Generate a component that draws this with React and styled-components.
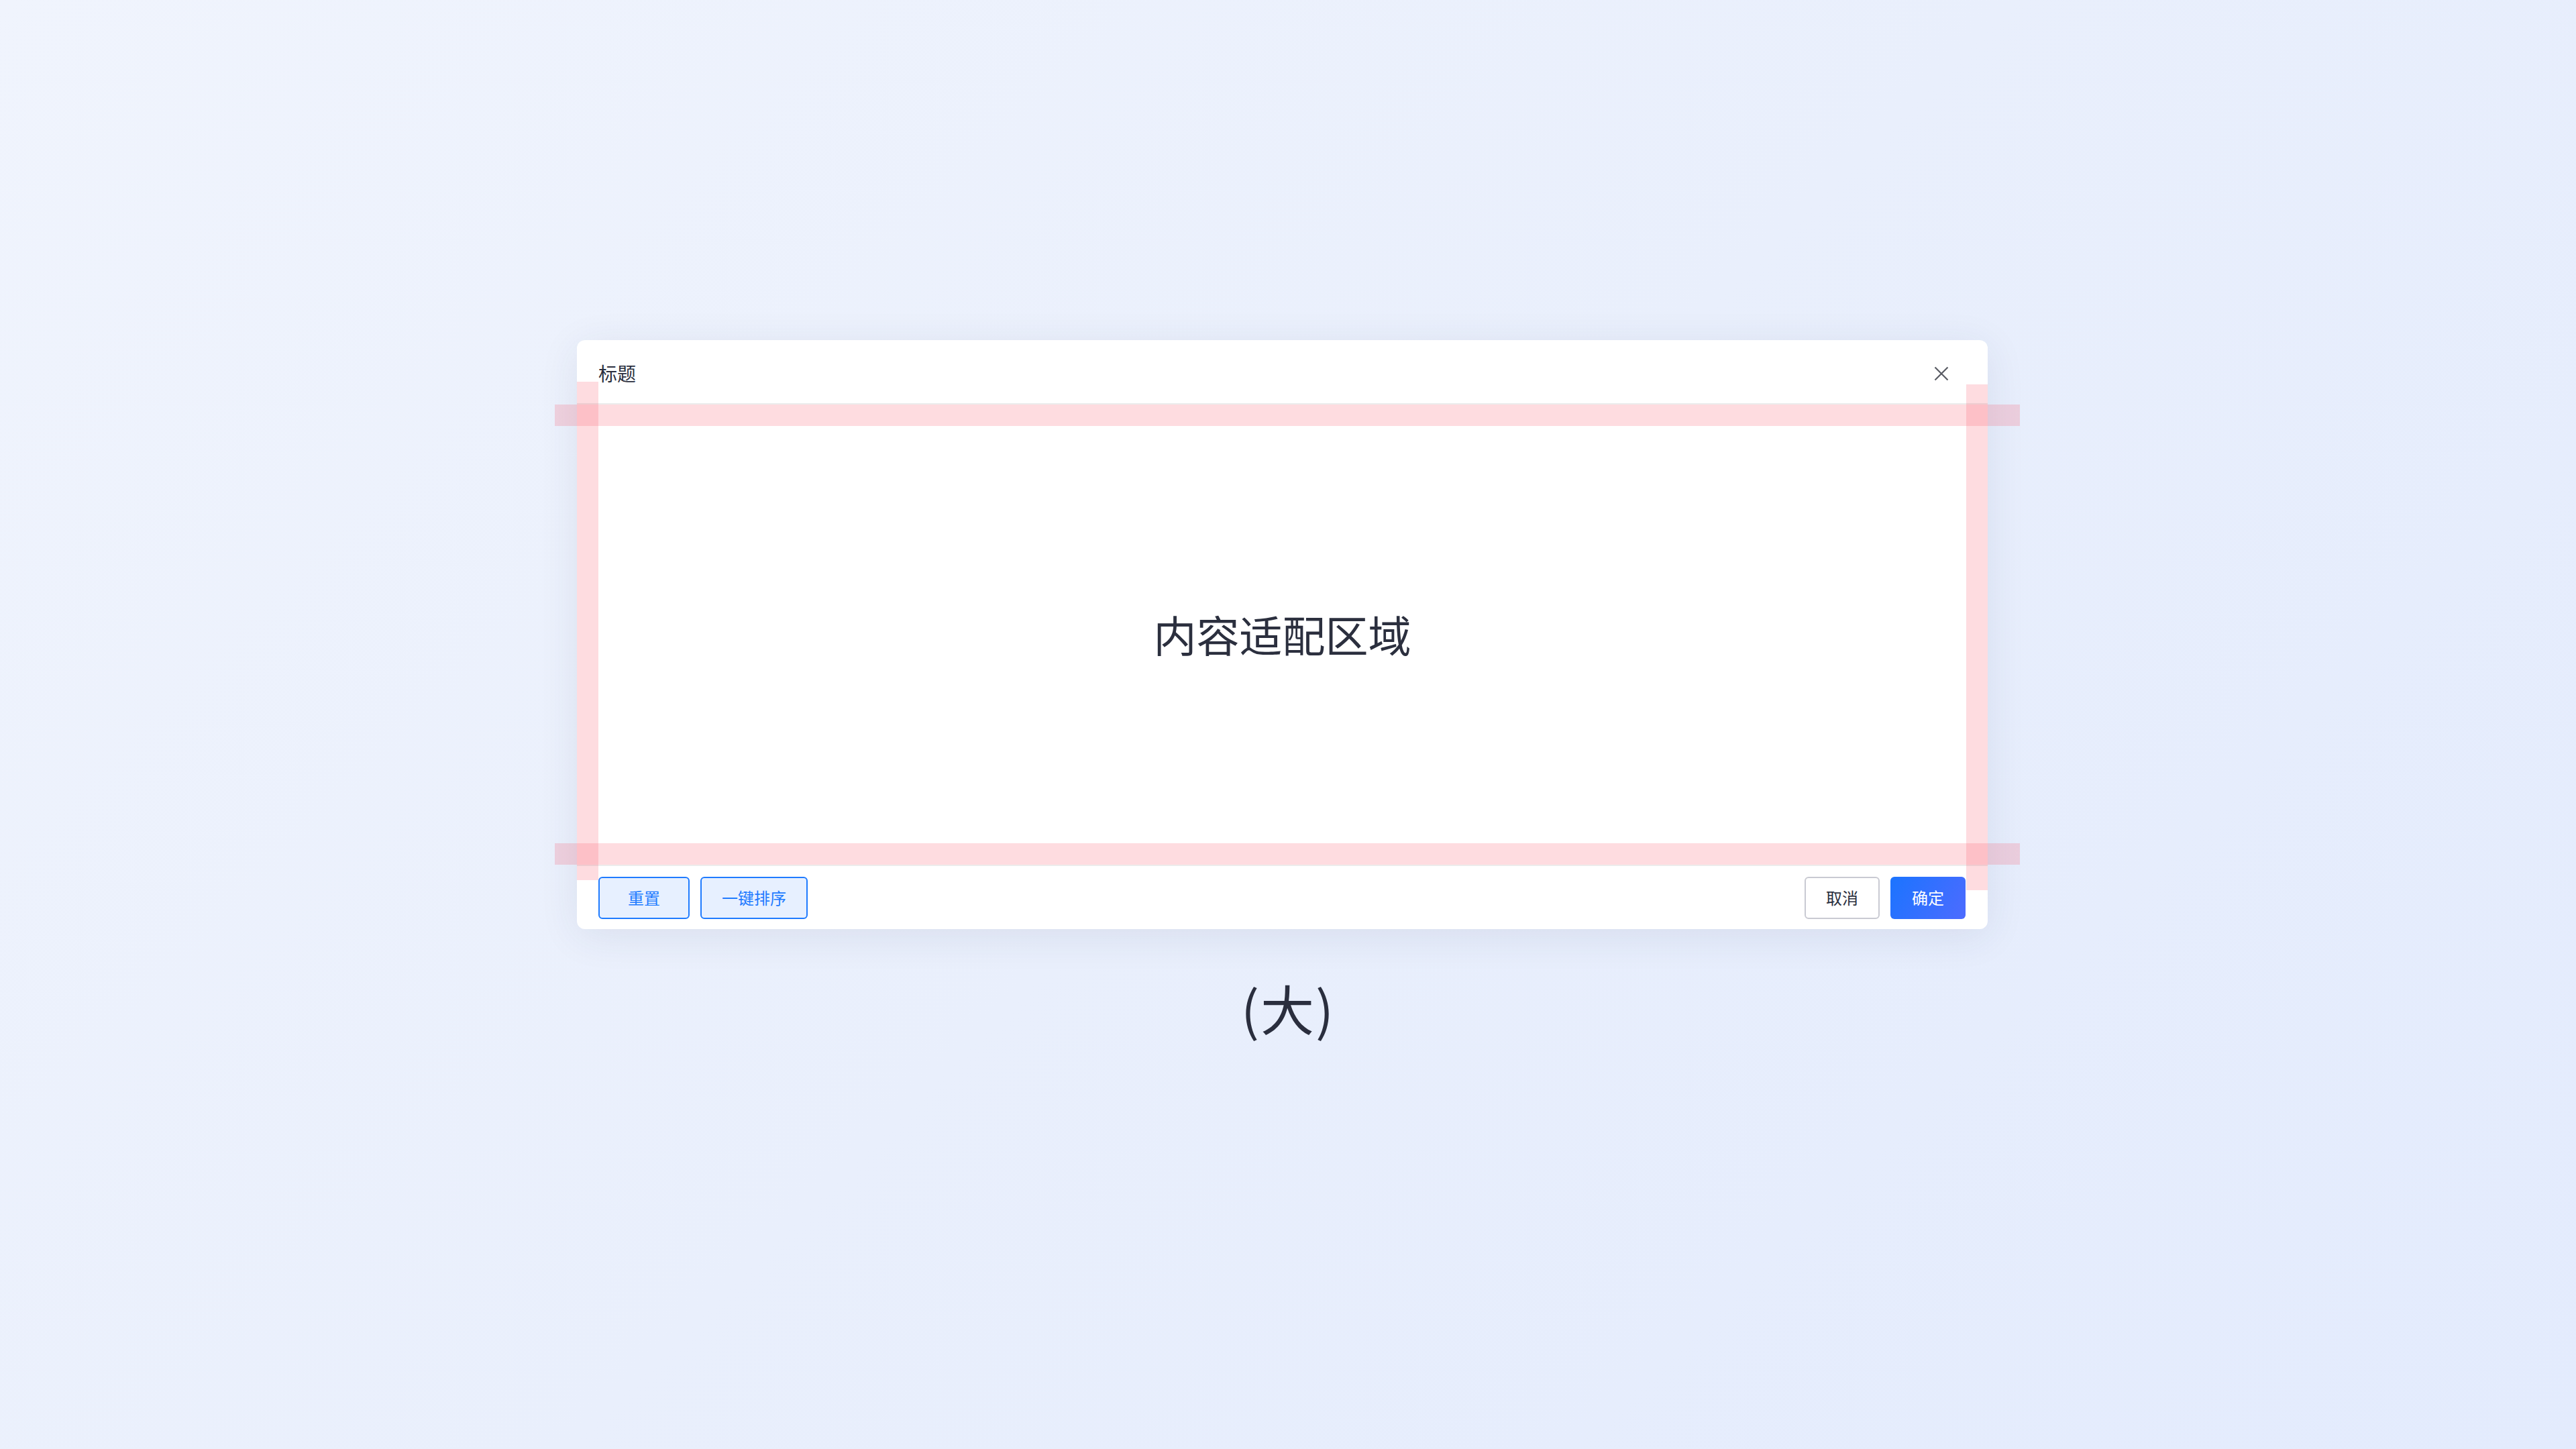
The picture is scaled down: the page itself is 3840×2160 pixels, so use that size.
import React from 'react';
import styled, { createGlobalStyle } from 'styled-components';

const GlobalStyle = createGlobalStyle`
	html, body {
		margin: 0;
		padding: 0;
	}
	body {
		font-family: 'Noto Sans CJK SC', 'Noto Sans', sans-serif;
		color: #2b2f3e;
	}
	* {
		box-sizing: border-box;
	}
`;

const CloseIcon = () => (
	<svg width="22" height="22" viewBox="0 0 22 22" fill="none">
		<path d="M1.5 1.5L20.5 20.5M20.5 1.5L1.5 20.5" stroke="#595b63" strokeWidth="2.2" />
	</svg>
);

const App = () => {
	return (
		<>
			<GlobalStyle />
			<Stage>
				<Modal>
					<Header>
						<Title>标题</Title>
						<CloseButton aria-label="close">
							<CloseIcon />
						</CloseButton>
					</Header>
					<Body>内容适配区域</Body>
					<Footer>
						<ButtonGroup>
							<Button variant="ghost" width={136}>
								重置
							</Button>
							<Button variant="ghost" width={160}>
								一键排序
							</Button>
						</ButtonGroup>
						<ButtonGroup>
							<Button variant="default" width={112}>
								取消
							</Button>
							<Button variant="primary" width={112}>
								确定
							</Button>
						</ButtonGroup>
					</Footer>

					{/* padding guides */}
					<GuideBar orient="h" top={96} />
					<GuideBar orient="h" top={750} />
					<GuideBar orient="v" side="left" top={62} length={743} />
					<GuideBar orient="v" side="right" top={66} length={754} />
				</Modal>
				<Caption>(大)</Caption>
			</Stage>
		</>
	);
};

const Stage = styled.div`
	min-height: 2160px;
	display: flex;
	flex-direction: column;
	align-items: center;
	padding-top: 507px;
	background: linear-gradient(135deg, #f0f4fd 0%, #e9effc 50%, #e3ebfd 100%);
`;

const Modal = styled.div`
	position: relative;
	width: 2103px;
	margin-right: 17px;
	background: #fff;
	border-radius: 12px;
	box-shadow: 0 10px 60px rgba(40, 52, 90, 0.09);
	display: flex;
	flex-direction: column;
`;

const Header = styled.div`
	height: 96px;
	padding: 0 58px 0 32px;
	display: flex;
	align-items: center;
	justify-content: space-between;
	border-bottom: 2px solid #ececec;
`;

const Title = styled.div`
	font-size: 28px;
	line-height: 1;
	color: #2b2f3e;
	margin-top: 4px;
`;

const CloseButton = styled.button`
	border: none;
	background: none;
	padding: 0;
	display: flex;
	cursor: pointer;
	margin-top: 6px;
`;

const Body = styled.div`
	height: 688px;
	padding-bottom: 5px;
	display: flex;
	align-items: center;
	justify-content: center;
	font-size: 64px;
	color: #2b2f3e;
	border-bottom: 2px solid #ececec;
`;

const Footer = styled.div`
	height: 94px;
	padding: 0 33px 0 32px;
	display: flex;
	align-items: center;
	justify-content: space-between;
`;

const ButtonGroup = styled.div`
	display: flex;
	gap: 16px;
`;

const variants = {
	ghost: `
		color: #1f7bff;
		background: #e7f0ff;
		border: 2px solid #1f7bff;
	`,
	default: `
		color: #2b2f3e;
		background: #fff;
		border: 2px solid #c9cad2;
	`,
	primary: `
		color: #fff;
		background: linear-gradient(120deg, #1b74ff 0%, #4d6bff 100%);
		border: none;
	`,
};

const Button = styled.button`
	width: ${props => props.width}px;
	height: 63px;
	border-radius: 6px;
	font-family: inherit;
	font-size: 24px;
	line-height: 1;
	padding: 0;
	cursor: pointer;
	${props => variants[props.variant]}
`;

const GuideBar = styled.div`
	position: absolute;
	pointer-events: none;
	background: rgba(250, 80, 100, 0.2);
	top: ${props => props.top}px;
	${props =>
		props.orient === 'h'
			? `left: -33px; right: -48px; height: 32px;`
			: `${props.side}: 0; width: 32px; height: ${props.length}px;`}
`;

const Caption = styled.div`
	margin-top: 68px;
	font-size: 80px;
	line-height: 1.2;
	letter-spacing: 2px;
	color: #2a2e3e;
`;

export default App;
